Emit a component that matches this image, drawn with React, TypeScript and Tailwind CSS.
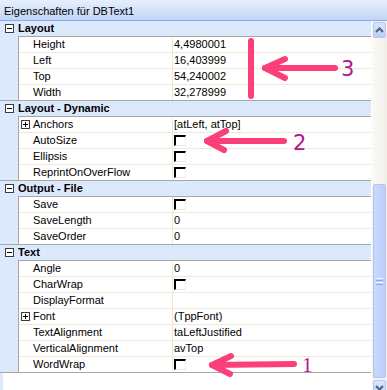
import React from 'react';

type Row = {
  name: string;
  value?: string;
  check?: boolean;
  expand?: boolean;
};

type Section = {
  title: string;
  rows: Row[];
};

const sections: Section[] = [
  {
    title: 'Layout',
    rows: [
      { name: 'Height', value: '4,4980001' },
      { name: 'Left', value: '16,403999' },
      { name: 'Top', value: '54,240002' },
      { name: 'Width', value: '32,278999' }
    ]
  },
  {
    title: 'Layout - Dynamic',
    rows: [
      { name: 'Anchors', value: '[atLeft, atTop]', expand: true },
      { name: 'AutoSize', check: true },
      { name: 'Ellipsis', check: true },
      { name: 'ReprintOnOverFlow', check: true }
    ]
  },
  {
    title: 'Output - File',
    rows: [
      { name: 'Save', check: true },
      { name: 'SaveLength', value: '0' },
      { name: 'SaveOrder', value: '0' }
    ]
  },
  {
    title: 'Text',
    rows: [
      { name: 'Angle', value: '0' },
      { name: 'CharWrap', check: true },
      { name: 'DisplayFormat', value: '' },
      { name: 'Font', value: '(TppFont)', expand: true },
      { name: 'TextAlignment', value: 'taLeftJustified' },
      { name: 'VerticalAlignment', value: 'avTop' },
      { name: 'WordWrap', check: true }
    ]
  }
];

// 小さな [-] / [+] ボックス
function ToggleBox({ plus }: { plus?: boolean }) {
  return (
    <span className="relative inline-block w-[9px] h-[9px] border border-[#3c3c3c] bg-white">
      <span className="absolute left-[1px] top-[3px] w-[5px] h-px bg-black" />
      {plus ? <span className="absolute left-[3px] top-[1px] w-px h-[5px] bg-black" /> : null}
    </span>
  );
}

function CheckBox() {
  return (
    <span className="block mt-[2px] w-[12px] h-[11px] border-t-2 border-l-2 border-r border-b border-t-black border-l-black border-r-[#f1f0ea] border-b-[#ebe9e0] bg-white" />
  );
}

function PropRow({ row, last }: { row: Row; last: boolean }) {
  return (
    <div className={`flex ${last ? 'h-[15px]' : 'h-[16px] border-b border-[#ece9d8]'}`}>
      <div className="flex items-start w-[154px] border-r border-[#ece9d8] leading-[15px]">
        {row.expand ? (
          <span className="flex items-center w-[14px] h-[15px] pl-[2px]">
            <ToggleBox plus />
          </span>
        ) : (
          <span className="w-[14px]" />
        )}
        <span>{row.name}</span>
      </div>
      <div className="flex-1 pl-px leading-[15px]">{row.check ? <CheckBox /> : row.value}</div>
    </div>
  );
}

function SectionBlock({ section }: { section: Section }) {
  return (
    <div>
      <div className="flex items-center h-[15px] bg-[#dce8fc]">
        <span className="flex items-center w-[18px] h-[15px] pl-[5px]">
          <ToggleBox />
        </span>
        <span className="font-bold leading-[15px]">{section.title}</span>
      </div>
      <div className="flex">
        <div className="w-[18px] bg-[#dce8fc]" />
        <div className="flex-1 border-l border-t border-[#aca899] bg-white">
          {section.rows.map((row, i) => (
            <PropRow key={row.name} row={row} last={i === section.rows.length - 1} />
          ))}
        </div>
      </div>
      <div className="h-px bg-[#aca899]" />
    </div>
  );
}

function ScrollBar() {
  return (
    <div className="flex flex-col w-[16px] bg-[#f4f3ee] border-l border-[#ffffff]">
      <div className="mt-px mx-px h-[16px] rounded-[2px] border border-[#b5c8f3] bg-gradient-to-b from-[#d9e5fd] to-[#bccff9] flex items-center justify-center">
        <svg width="9" height="6" viewBox="0 0 9 6">
          <polyline points="1,5 4.5,1.5 8,5" fill="none" stroke="#4d6185" strokeWidth="2" />
        </svg>
      </div>
      <div className="h-[146px] bg-gradient-to-r from-[#fbfaf6] to-[#efeee7]" />
      <div className="mx-px h-[194px] rounded-[2px] border border-[#b1c5f4] bg-gradient-to-r from-[#c9d9fd] to-[#bbcefa] flex flex-col items-center justify-center gap-px">
        <span className="w-[7px] h-px bg-[#eef3fe]" />
        <span className="w-[7px] h-px bg-[#8eaaea]" />
        <span className="w-[7px] h-px bg-[#eef3fe]" />
        <span className="w-[7px] h-px bg-[#8eaaea]" />
      </div>
      <div className="h-[2px]" />
      <div className="mx-px h-[16px] rounded-[2px] border border-[#b5c8f3] bg-gradient-to-b from-[#d9e5fd] to-[#bccff9] flex items-center justify-center">
        <svg width="9" height="6" viewBox="0 0 9 6">
          <polyline points="1,1 4.5,4.5 8,1" fill="none" stroke="#4d6185" strokeWidth="2" />
        </svg>
      </div>
    </div>
  );
}

export default function App() {
  return (
    <div className="relative w-[387px] h-[390px] overflow-hidden bg-white text-[11px] text-black font-['Liberation_Sans',Arial,sans-serif]">
      <div className="h-[21px] pt-[2px] pl-[4px] leading-[18px] border-b border-[#88acea] bg-gradient-to-b from-[#e6effc] to-[#c2d5f5]">
        Eigenschaften für DBText1
      </div>
      <div className="flex">
        <div className="w-[371px]">
          {sections.map((s) => (
            <SectionBlock key={s.title} section={s} />
          ))}
          <div className="h-[20px] border-l-[3px] border-[#dce8fc] bg-white" />
        </div>
        <ScrollBar />
      </div>

      {/* 注釈の矢印 */}
      <svg className="absolute left-0 top-0 pointer-events-none" width="387" height="390" viewBox="0 0 387 390">
        <g fill="none" stroke="#fb3f78" strokeWidth="6" strokeLinecap="round" strokeLinejoin="round">
          <line x1="251" y1="41" x2="251" y2="96" />
          <line x1="265" y1="68" x2="335" y2="68" />
          <polyline points="285,59 265,68 285,78" />
          <line x1="207" y1="141" x2="284" y2="141" />
          <polyline points="226,131 207,141 224,150" />
          <line x1="212" y1="365" x2="294" y2="364" />
          <polyline points="231,356 212,365 230,374" />
        </g>
      </svg>
      <span className="absolute left-[341px] top-[57px] text-[21px] leading-[24px] text-[#b5138c] font-['DejaVu_Sans',sans-serif]">
        3
      </span>
      <span className="absolute left-[293px] top-[131px] text-[21px] leading-[24px] text-[#b5138c] font-['DejaVu_Sans',sans-serif]">
        2
      </span>
      <span className="absolute left-[302px] top-[353px] text-[21px] leading-[24px] text-[#b5138c] font-['Liberation_Serif',serif]">
        1
      </span>
    </div>
  );
}
